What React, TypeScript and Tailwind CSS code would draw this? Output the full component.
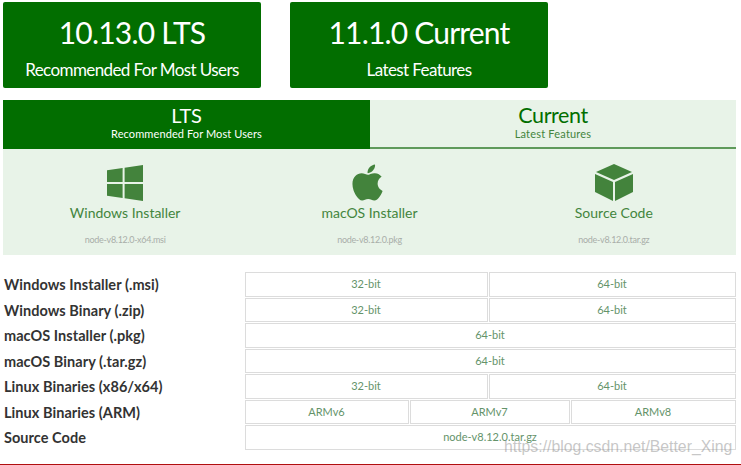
import { FaApple } from "react-icons/fa";

function BigButton({ title, sub }: { title: string; sub: string }) {
    return (
        <div className="w-[258px] h-[86px] bg-[#026e00] rounded-[2px] text-white text-center">
            <p className="text-[30px] leading-[38px] mt-[11px] tracking-[-0.8px]">{title}</p>
            <p className="text-[17px] leading-[22px] mt-[8px] tracking-[-0.6px]">{sub}</p>
        </div>
    );
}

function WindowsIcon() {
    return (
        <svg width="36" height="36" viewBox="0 0 36 36" fill="#43833c">
            <path d="M0 5.2 15.6 3v14H0z" />
            <path d="M17.6 2.7 36 0v17H17.6z" />
            <path d="M0 19h15.6v14L0 30.8z" />
            <path d="M17.6 19H36v17l-18.4-2.7z" />
        </svg>
    );
}

function CubeIcon() {
    return (
        <svg width="38" height="37" viewBox="0 0 38 37" fill="#43833c">
            <path d="M19 0 37 8 19 16 1 8z" />
            <path d="M0 10 18 18V37L0 28z" />
            <path d="M38 10 20 18V37L38 28z" />
        </svg>
    );
}

function Download({ icon, label, file }: { icon: React.ReactNode; label: string; file: string }) {
    return (
        <div className="flex-1 flex flex-col items-center">
            <div className="h-[37px] flex items-center justify-center">{icon}</div>
            <p className="text-[#43853d] text-[14px] leading-[20px] mt-[2px]">{label}</p>
            <p className="text-[#a9aea9] text-[9px] leading-[12px] mt-[11px] tracking-[-0.3px]">{file}</p>
        </div>
    );
}

function Row({ label, cells }: { label: string; cells: { text: string; w: string }[] }) {
    return (
        <div className="flex h-[25.5px]">
            <div className="w-[240.5px] ml-[2px] text-[14.5px] font-bold text-[#333] leading-[25px] tracking-[0.05px]">{label}</div>
            <div className="flex gap-[1px] w-[491px] h-[24.5px]">
                {cells.map((c, i) => (
                    <div
                        key={i}
                        className={`${c.w} border border-[#dcdcdc] flex items-center justify-center text-[11px] text-[#64936a]`}
                    >
                        {c.text}
                    </div>
                ))}
            </div>
        </div>
    );
}

const half = [
    { text: "32-bit", w: "w-[243px]" },
    { text: "64-bit", w: "w-[247px]" },
];
const full = [{ text: "64-bit", w: "w-full" }];

export default function App() {
    return (
        <div className="relative w-[741px] h-[465px] bg-white overflow-hidden font-['Lato',sans-serif] pl-[3px] pt-[2px]">
            <div className="flex gap-[29px]">
                <BigButton title="10.13.0 LTS" sub="Recommended For Most Users" />
                <BigButton title="11.1.0 Current" sub="Latest Features" />
            </div>

            <div className="w-[733px] mt-[12px]">
                <div className="flex h-[49px] text-center">
                    <div className="w-[367px] bg-[#026e00] text-white pt-[3px] border-b-2 border-[#026e00]">
                        <p className="text-[20px] leading-[24px] tracking-[-0.1px]">LTS</p>
                        <p className="text-[11px] leading-[14px] tracking-[0.1px]">Recommended For Most Users</p>
                    </div>
                    <div className="flex-1 bg-[#e8f3e8] text-[#026e00] pt-[3px] border-b-2 border-[#5f9a5b]">
                        <p className="text-[21.5px] leading-[24px] tracking-[-0.4px]">Current</p>
                        <p className="text-[11px] leading-[14px] text-[#43853d] tracking-[0.2px]">Latest Features</p>
                    </div>
                </div>
                <div className="flex h-[106px] bg-[#e8f3e8] pt-[15px]">
                    <Download icon={<WindowsIcon />} label="Windows Installer" file="node-v8.12.0-x64.msi" />
                    <Download icon={<FaApple size={41} color="#43833c" className="-ml-[3px]" />} label="macOS Installer" file="node-v8.12.0.pkg" />
                    <Download icon={<CubeIcon />} label="Source Code" file="node-v8.12.0.tar.gz" />
                </div>
            </div>

            <div className="mt-[17px] -ml-[1px]">
                <Row label="Windows Installer (.msi)" cells={half} />
                <Row label="Windows Binary (.zip)" cells={half} />
                <Row label="macOS Installer (.pkg)" cells={full} />
                <Row label="macOS Binary (.tar.gz)" cells={full} />
                <Row label="Linux Binaries (x86/x64)" cells={half} />
                <Row
                    label="Linux Binaries (ARM)"
                    cells={[
                        { text: "ARMv6", w: "w-[164px]" },
                        { text: "ARMv7", w: "w-[160px]" },
                        { text: "ARMv8", w: "w-[165px]" },
                    ]}
                />
                <Row label="Source Code" cells={[{ text: "node-v8.12.0.tar.gz", w: "w-full" }]} />
            </div>

            {/* csdn watermark + red rule */}
            <span className="absolute left-[504px] top-[437px] text-[15.8px] leading-[20px] whitespace-nowrap font-['Liberation_Sans',sans-serif] text-[#8f8f8f]/50">
                https://blog.csdn.net/Better_Xing
            </span>
            <div className="absolute left-0 right-0 bottom-0 h-[1px] bg-[#b00f0f]" />
        </div>
    );
}
